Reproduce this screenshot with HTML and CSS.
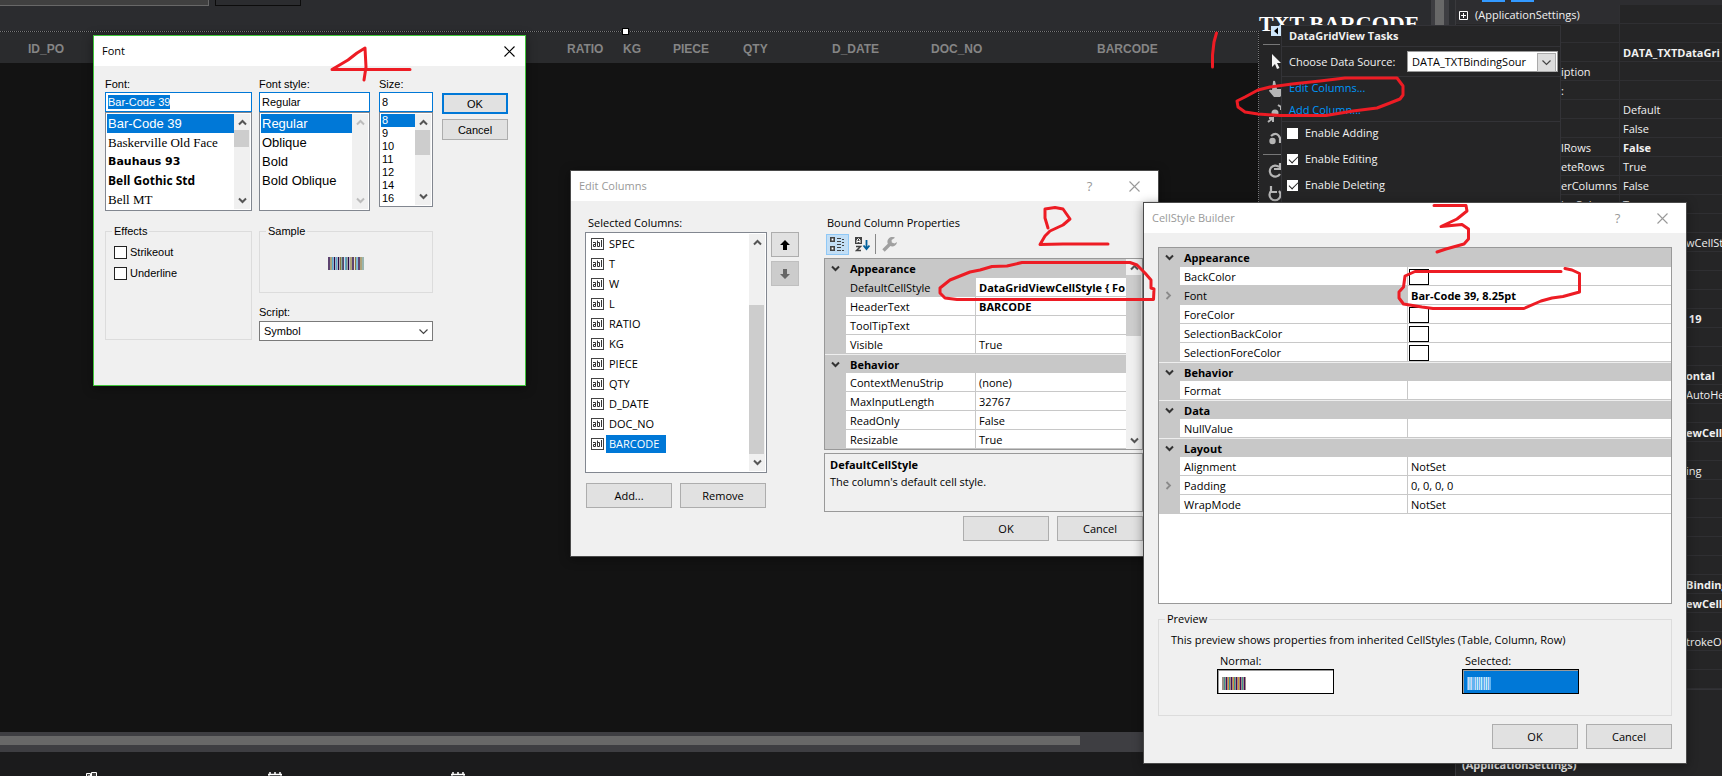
FILE: index.html
```html
<!DOCTYPE html>
<html lang="en">
<head>
<meta charset="utf-8">
<title>DataGridView column font</title>
<link rel="stylesheet" href="styles.css">
</head>
<body>
<svg class="defs" aria-hidden="true">
  <symbol id="up" viewBox="0 0 9 7"><path d="M1 5.500 4.500 2 8 5.500" fill="none" stroke="currentColor" stroke-width="2"/></symbol>
  <symbol id="down" viewBox="0 0 9 7"><path d="M1 1.500 4.500 5 8 1.500" fill="none" stroke="currentColor" stroke-width="2"/></symbol>
  <symbol id="thin" viewBox="0 0 9 7"><path d="M.5 1.500 4.500 5.500 8.500 1.500" fill="none" stroke="currentColor" stroke-width="1.200"/></symbol>
  <symbol id="right" viewBox="0 0 7 9"><path d="M1.500 1 5 4.500 1.500 8" fill="none" stroke="#8a8a8a" stroke-width="1.800"/></symbol>
  <symbol id="close" viewBox="0 0 11 11"><path d="M.5 .5 10.500 10.500M10.500 .5 .5 10.500" fill="none" stroke="currentColor" stroke-width="1.100"/></symbol>
  <symbol id="abl" viewBox="0 0 13 12"><rect x=".5" y=".5" width="12" height="11" fill="#fff" stroke="#424242"/><path d="M2 4.500h2.500v4h-2v-2h2M6.500 2.500v6h2v-4h-2M10.500 2v7" fill="none" stroke="#333"/></symbol>
  <symbol id="calendar" viewBox="0 0 14 5"><path d="M2 0v3M7 0v3M12 0v3M0 2.500h14" stroke="#fff" stroke-width="1.500"/><path d="M1 2v3M13 2v3" stroke="#fff"/><path d="M3 4h8v1H3z" fill="#777"/></symbol>
  <symbol id="bars" viewBox="0 0 36 13" preserveAspectRatio="none"><path d="M1 0v13M6.500 0v13M10.500 0v13M15 0v13M20.500 0v13M25 0v13M31 0v13" stroke="#2c0a45" stroke-width="1.500"/><path d="M3 0v13M12.500 0v13M23 0v13M27.500 0v13M33 0v13" stroke="#8b7b3c" stroke-width="1.300"/><path d="M4.700 0v13M8.500 0v13M17.500 0v13M29 0v13" stroke="#5ea8cf" stroke-width="1.500"/><path d="M14 0v13M18.800 0v13M35 0v13" stroke="#427a70"/></symbol>
  <symbol id="bars-small" viewBox="0 0 24 13"><path d="M0 0h24v13H0z" fill="#9c8f86"/><path d="M4.500 0v13M9.500 0v13M14.500 0v13M18.500 0v13M22.500 0v13" stroke="#4b0a55"/><path d="M2.500 0v13M7.500 0v13M12.500 0v13M20.500 0v13" stroke="#3f9392"/><path d="M6.500 0v13M11.500 0v13M16.500 0v13" stroke="#d98d3c"/></symbol>
  <symbol id="bars-light" viewBox="0 0 24 13"><path d="M0 0h24v13H0z" fill="#63b4f0"/><path d="M1.500 0v13M4.500 0v13M8.500 0v13M12.500 0v13M17.500 0v13M21.500 0v13" stroke="#c9d3f5"/><path d="M3 0v13M10.500 0v13M14.500 0v13M19.500 0v13" stroke="#b8f2f8"/></symbol>
</svg>

<div class="ide">
  <main class="designer">
    <div class="topstrip"><div class="field"></div><div class="field dark"></div></div>
    <div class="form">
      <div class="grid-view">
        <table class="columns">
          <tr><th class="c-id">ID_PO</th><th class="c-ratio">RATIO</th><th class="c-kg">KG</th><th class="c-piece">PIECE</th><th class="c-qty">QTY</th><th class="c-date">D_DATE</th><th class="c-doc">DOC_NO</th><th>BARCODE</th></tr>
        </table>
      </div>
      <div class="tools">
        <hr>
        <svg width="22" height="160" viewBox="0 0 22 160">
          <path d="M13 9v13l3-3 2 5 2.500-1-2.500-5h4z" fill="#f4f4f4"/>
          <path d="M14 37q0-2 2-1l2 8h5v6l-2 2h-6l-5-6q0-2 3-1z" fill="#b5b5b5"/>
          <circle cx="16" cy="68" r="3.500" fill="#b5b5b5"/><path d="M19 60l3 2v3M9 77l5-4M10 73h4v4" fill="none" stroke="#b5b5b5" stroke-width="2"/>
          <circle cx="13.500" cy="96" r="3.200" fill="#b5b5b5"/><path d="M12 91q6-5 9 2v5" fill="none" stroke="#b5b5b5" stroke-width="2.200"/>
          <path d="M4 109.500h18" stroke="#777"/>
          <path d="M20 122a5.500 5.500 0 1 0 1 7M21 118v6h-6" fill="none" stroke="#b5b5b5" stroke-width="2.200"/>
          <path d="M12 146a5.500 5.500 0 1 0 8 0M12 141v6h6" fill="none" stroke="#b5b5b5" stroke-width="2.200"/>
        </svg>
      </div>
    </div>
    <div class="hscroll"><div class="hthumb"></div></div>
    <div class="tray">
      <svg width="14" height="5" viewBox="0 0 14 5"><path d="M1.500 5V1.500h4V5M6.500 5V.5h5V5M3 4h2" fill="#444" stroke="#fff"/></svg>
      <svg width="14" height="5"><use href="#calendar"/></svg>
      <svg width="14" height="5"><use href="#calendar"/></svg>
    </div>
    <div class="caption">TXT BARCODE</div>
    <div class="handle"></div>
    <div class="vscroll"></div>
  </main>
  <aside class="props">
    <div class="props-bar"><span></span><span></span></div>
    <table class="props-table">
      <tr class="first"><td><svg width="9" height="9" viewBox="0 0 9 9"><path d="M.5.5h8v8h-8zM2 4.500h5M4.500 2v5" fill="none" stroke="#fff"/></svg>(ApplicationSettings)</td><td></td></tr>
      <tr><td></td><td></td></tr>
      <tr><td></td><td><b>DATA_TXTDataGri</b></td></tr>
      <tr><td class="cut">iption</td><td></td></tr>
      <tr><td class="cut">:</td><td></td></tr>
      <tr><td></td><td>Default</td></tr>
      <tr><td></td><td>False</td></tr>
      <tr><td class="cut">lRows</td><td><b>False</b></td></tr>
      <tr><td class="cut">eteRows</td><td>True</td></tr>
      <tr><td class="cut">erColumns</td><td>False</td></tr>
      <tr><td class="cut">izeColumns</td><td>True</td></tr>
      <tr><td></td><td></td></tr>
      <tr><td></td><td class="tail">wCellSt</td></tr>
      <tr><td></td><td></td></tr><tr><td></td><td></td></tr><tr><td></td><td></td></tr>
      <tr><td></td><td class="tail"><b>&nbsp;19</b></td></tr>
      <tr><td></td><td></td></tr><tr><td></td><td></td></tr>
      <tr><td></td><td class="tail"><b>ontal</b></td></tr>
      <tr><td></td><td class="tail">AutoHe</td></tr>
      <tr><td></td><td></td></tr>
      <tr><td></td><td class="tail"><b>ewCell</b></td></tr>
      <tr><td></td><td></td></tr>
      <tr><td></td><td class="tail">ing</td></tr>
      <tr><td></td><td></td></tr><tr><td></td><td></td></tr><tr><td></td><td></td></tr><tr><td></td><td></td></tr><tr><td></td><td></td></tr>
      <tr><td></td><td class="tail"><b>Binding</b></td></tr>
      <tr><td></td><td class="tail"><b>ewCell</b></td></tr>
      <tr><td></td><td></td></tr>
      <tr><td></td><td class="tail">trokeOn</td></tr>
      <tr><td></td><td></td></tr><tr><td></td><td></td></tr>
    </table>
    <div class="props-help">(ApplicationSettings)</div>
  </aside>
</div>

<section class="tasks">
  <svg class="tag" width="10" height="10" viewBox="0 0 10 10"><rect width="10" height="10" fill="#cfe6fa"/><path d="M7 1.500v7L3 5z" fill="#000"/></svg>
  <h2>DataGridView Tasks</h2>
  <div class="source"><label for="src">Choose Data Source:</label>
    <div class="combo"><select id="src"><option>DATA_TXTBindingSour</option></select><i><svg width="9" height="7"><use href="#thin"/></svg></i></div></div>
  <div class="links"><a href="#">Edit Columns...</a><a href="#">Add Column...</a></div>
  <div class="checks">
    <label><input type="checkbox">Enable Adding</label>
    <label><input type="checkbox" checked>Enable Editing</label>
    <label><input type="checkbox" checked>Enable Deleting</label>
  </div>
</section>

<section class="window edit">
  <header><h2>Edit Columns</h2><button class="icon">?</button><button class="icon" aria-label="Close"><svg width="11" height="11"><use href="#close"/></svg></button></header>
  <div class="edit-body">
    <div class="left">
      <h3>Selected Columns:</h3>
      <div class="pick">
        <div class="list">
          <ul class="fields">
            <li><svg><use href="#abl"/></svg><span>SPEC</span></li>
            <li><svg><use href="#abl"/></svg><span>T</span></li>
            <li><svg><use href="#abl"/></svg><span>W</span></li>
            <li><svg><use href="#abl"/></svg><span>L</span></li>
            <li><svg><use href="#abl"/></svg><span>RATIO</span></li>
            <li><svg><use href="#abl"/></svg><span>KG</span></li>
            <li><svg><use href="#abl"/></svg><span>PIECE</span></li>
            <li><svg><use href="#abl"/></svg><span>QTY</span></li>
            <li><svg><use href="#abl"/></svg><span>D_DATE</span></li>
            <li><svg><use href="#abl"/></svg><span>DOC_NO</span></li>
            <li><svg><use href="#abl"/></svg><span class="on">BARCODE</span></li>
          </ul>
          <div class="bar"><svg width="9" height="7"><use href="#up"/></svg><div class="track"><div class="thumb t-fields"></div></div><svg width="9" height="7"><use href="#down"/></svg></div>
        </div>
        <div class="move">
          <button class="btn" aria-label="Move up"><svg width="10" height="10" viewBox="0 0 10 10"><path d="M5 0l5 5H7v5H3V5H0z" fill="#000"/></svg></button>
          <button class="btn off" aria-label="Move down"><svg width="10" height="10" viewBox="0 0 10 10"><path d="M5 10l5-5H7V0H3v5H0z" fill="#666"/></svg></button>
        </div>
      </div>
      <div class="pair"><button class="btn">Add...</button><button class="btn">Remove</button></div>
    </div>
    <div class="bound">
      <h3>Bound Column Properties</h3>
      <div class="toolbar">
        <button class="on" aria-label="Categorized"><svg width="15" height="15" viewBox="0 0 15 15"><path d="M.8.8h3.400v3.400H.8zM.8 9.800h3.400v3.400H.8z" fill="#fff" stroke="#424242" stroke-width="1.600"/><path d="M7 1.500h4M7 4.500h4M7 7.500h4M7 10.500h4M7 13.500h4M12 2.500h2M12 5.500h2M12 8.500h2M12 13.500h2" stroke="#424242"/></svg></button>
        <button aria-label="Alphabetical"><svg width="15" height="15" viewBox="0 0 15 15"><path d="M0 0h7v7H0z" fill="#424242"/><path d="M2 6V3l1.500-1.500L5 3v3M2 4.500h3" stroke="#fff" fill="none"/><path d="M1 9.500h4.500l-4 4H6" stroke="#424242" stroke-width="1.500" fill="none"/><path d="M11.500 3v8M8.500 8.500l3 3.500 3-3.500" stroke="#00609c" stroke-width="1.800" fill="none"/></svg></button>
        <i></i>
        <button aria-label="Property pages"><svg width="16" height="15" viewBox="0 0 16 15"><path d="M1.500 13.500 8 7" stroke="#a0a0a0" stroke-width="3.400"/><path d="M13 .8A4.800 4.800 0 1 0 15 5L12.500 6.500 9.800 5.500 9.600 3z" fill="#a0a0a0"/></svg></button>
      </div>
      <div class="grid-box">
        <table class="pg">
          <colgroup><col class="gut"><col class="name"><col></colgroup>
          <tr class="cat"><th><svg width="9" height="7"><use href="#down"/></svg></th><td colspan="2">Appearance</td></tr>
          <tr class="sel"><th></th><td>DefaultCellStyle</td><td><b>DataGridViewCellStyle { Fo</b></td></tr>
          <tr><th></th><td>HeaderText</td><td><b>BARCODE</b></td></tr>
          <tr><th></th><td>ToolTipText</td><td></td></tr>
          <tr><th></th><td>Visible</td><td>True</td></tr>
          <tr class="cat"><th><svg width="9" height="7"><use href="#down"/></svg></th><td colspan="2">Behavior</td></tr>
          <tr><th></th><td>ContextMenuStrip</td><td>(none)</td></tr>
          <tr><th></th><td>MaxInputLength</td><td>32767</td></tr>
          <tr><th></th><td>ReadOnly</td><td>False</td></tr>
          <tr><th></th><td>Resizable</td><td>True</td></tr>
        </table>
        <div class="bar"><svg width="9" height="7"><use href="#up"/></svg><div class="track"><div class="thumb t-props"></div></div><svg width="9" height="7"><use href="#down"/></svg></div>
      </div>
      <div class="help"><b>DefaultCellStyle</b><p>The column's default cell style.</p></div>
      <div class="pair end"><button class="btn">OK</button><button class="btn">Cancel</button></div>
    </div>
  </div>
</section>

<section class="window style">
  <header><h2>CellStyle Builder</h2><button class="icon">?</button><button class="icon" aria-label="Close"><svg width="11" height="11"><use href="#close"/></svg></button></header>
  <div class="style-body">
    <div class="grid-box tall">
      <table class="pg">
        <colgroup><col class="gut"><col class="name-wide"><col></colgroup>
        <tr class="cat"><th><svg width="9" height="7"><use href="#down"/></svg></th><td colspan="2">Appearance</td></tr>
        <tr><th></th><td>BackColor</td><td class="sw"><i></i></td></tr>
        <tr class="sel"><th><svg width="7" height="9"><use href="#right"/></svg></th><td>Font</td><td><b>Bar-Code 39, 8.25pt</b></td></tr>
        <tr><th></th><td>ForeColor</td><td class="sw"><i></i></td></tr>
        <tr><th></th><td>SelectionBackColor</td><td class="sw"><i></i></td></tr>
        <tr><th></th><td>SelectionForeColor</td><td class="sw"><i></i></td></tr>
        <tr class="cat"><th><svg width="9" height="7"><use href="#down"/></svg></th><td colspan="2">Behavior</td></tr>
        <tr><th></th><td>Format</td><td></td></tr>
        <tr class="cat"><th><svg width="9" height="7"><use href="#down"/></svg></th><td colspan="2">Data</td></tr>
        <tr><th></th><td>NullValue</td><td></td></tr>
        <tr class="cat"><th><svg width="9" height="7"><use href="#down"/></svg></th><td colspan="2">Layout</td></tr>
        <tr><th></th><td>Alignment</td><td>NotSet</td></tr>
        <tr><th><svg width="7" height="9"><use href="#right"/></svg></th><td>Padding</td><td>0, 0, 0, 0</td></tr>
        <tr><th></th><td>WrapMode</td><td>NotSet</td></tr>
      </table>
    </div>
    <fieldset class="preview">
      <legend>Preview</legend>
      <p>This preview shows properties from inherited CellStyles (Table, Column, Row)</p>
      <div class="samples">
        <div><span>Normal:</span><div class="cell"><svg width="24" height="13"><use href="#bars-small"/></svg></div></div>
        <div><span>Selected:</span><div class="cell blue"><svg width="24" height="13"><use href="#bars-light"/></svg></div></div>
      </div>
    </fieldset>
    <div class="pair end"><button class="btn">OK</button><button class="btn">Cancel</button></div>
  </div>
</section>

<section class="window font">
  <header><h2>Font</h2><button class="icon" aria-label="Close"><svg width="11" height="11"><use href="#close"/></svg></button></header>
  <div class="font-body">
    <div class="row">
      <div class="col w-font">
        <label for="f1">Font:</label>
        <div class="edit-line"><input id="f1" type="text" value="Bar-Code 39" class="marked"></div>
        <div class="list">
          <ul class="fonts"><li class="on">Bar-Code 39</li><li class="old">Baskerville Old Face</li><li class="bau">Bauhaus 93</li><li class="goth">Bell Gothic Std</li><li class="old">Bell MT</li></ul>
          <div class="bar"><svg width="9" height="7"><use href="#up"/></svg><div class="track"><div class="thumb t-font"></div></div><svg width="9" height="7"><use href="#down"/></svg></div>
        </div>
      </div>
      <div class="col w-style">
        <label for="f2">Font style:</label>
        <div class="edit-line"><input id="f2" type="text" value="Regular"></div>
        <div class="list">
          <ul class="fonts"><li class="on">Regular</li><li>Oblique</li><li>Bold</li><li>Bold Oblique</li></ul>
          <div class="bar idle"><svg width="9" height="7"><use href="#up"/></svg><div class="track"></div><svg width="9" height="7"><use href="#down"/></svg></div>
        </div>
      </div>
      <div class="col w-size">
        <label for="f3">Size:</label>
        <div class="edit-line"><input id="f3" type="text" value="8"></div>
        <div class="list short">
          <ul class="sizes"><li class="on">8</li><li>9</li><li>10</li><li>11</li><li>12</li><li>14</li><li>16</li></ul>
          <div class="bar"><svg width="9" height="7"><use href="#up"/></svg><div class="track"><div class="thumb t-size"></div></div><svg width="9" height="7"><use href="#down"/></svg></div>
        </div>
      </div>
      <div class="actions"><button class="btn main">OK</button><button class="btn">Cancel</button></div>
    </div>
    <div class="row lower">
      <fieldset class="effects w-font">
        <legend>Effects</legend>
        <label><input type="checkbox">Strikeout</label>
        <label><input type="checkbox">Underline</label>
      </fieldset>
      <div class="side">
        <fieldset class="sample"><legend>Sample</legend><svg width="36" height="13"><use href="#bars"/></svg></fieldset>
        <label for="script">Script:</label>
        <div class="combo"><select id="script"><option>Symbol</option></select><i><svg width="9" height="7"><use href="#thin"/></svg></i></div>
      </div>
    </div>
  </div>
</section>

<svg class="ink" width="1722" height="776" viewBox="0 0 1722 776" aria-hidden="true">
  <path d="M410 69.500H332L348 60 357 53 365 48 366 67 364 80"/>
  <path d="M1216.500 33 1214 42 1212.500 55V67"/>
  <path d="M1397 78H1345L1320 81 1292 84 1270 87 1258 90 1245 97 1237 101 1238 107 1245 112 1258 114 1280 115.500H1326L1353 111 1377 108 1390 103 1400 99 1403 95V86Z"/>
  <path d="M1048 228 1045 218V209L1055 207.500 1063 209 1070 219 1063 225 1050 231 1045 236 1040 244.500 1063 244H1108"/>
  <path d="M1130 262.500H1022L1007 266 992 266.500 980 270 970 272 950 280 940 288V293L945 298 957 299.500H1153.500L1154 289 1151 288V280L1145 273 1137 265Z"/>
  <path d="M1434 205.500H1466L1467 211 1457 219 1441 226.500 1462 224.500 1468.500 229V239L1464 244 1446 249 1437 252"/>
  <path d="M1561 271.500H1415L1405 276 1403.500 287 1399 292V298L1403.500 304 1422 307 1433 308.500H1524L1541 301 1552 298 1563 296.500 1579.500 292V273.500L1572 270 1565 268.500"/>
</svg>
</body>
</html>
```
FILE: styles.css
```css
* { box-sizing: border-box; }
body { margin: 0; height: 100vh; overflow: hidden; position: relative; background: #131313; font: 11px/16px "Open Sans", "Noto Sans", sans-serif; color: #000; }
h2, h3, p, ul, table, fieldset { margin: 0; padding: 0; font-size: 11px; font-weight: 400; }
ul { list-style: none; }
svg { display: block; flex: none; }
button, input, select { font: inherit; color: inherit; margin: 0; }
.defs { position: absolute; width: 0; height: 0; }
.ink { position: absolute; left: 0; top: 0; pointer-events: none; }
.ink path { fill: none; stroke: #ed1c24; stroke-width: 3; stroke-linejoin: round; stroke-linecap: round; }

/* IDE behind the dialogs */
.ide { display: flex; height: 100%; }
.designer { flex: 1; min-width: 0; display: flex; flex-direction: column; position: relative; background: #2b2c2f; }
.topstrip { display: flex; gap: 6px; height: 31px; }
.field { width: 209px; height: 6px; background: #404040; border: solid #686868; border-width: 0 1px 1px 0; }
.field.dark { width: 86px; background: #2b2c2f; border: 1px solid #0c0c0c; border-top: 0; }
.form { flex: 1; display: flex; }
.grid-view { flex: 1; border: dotted #77787a; border-width: 1px 1px 0 0; background: #131313; }
.columns { width: 100%; table-layout: fixed; border-spacing: 0; background: #2a2b2d; }
.columns th { height: 31px; padding: 3px 0 0 5px; text-align: left; font: bold 12px/16px "Liberation Sans", Arial, sans-serif; color: #858585; }
.columns .c-id { width: 562px; padding-left: 28px; }
.c-ratio { width: 56px; }
.c-kg { width: 50px; }
.c-piece { width: 70px; }
.c-qty { width: 89px; }
.c-date { width: 99px; }
.c-doc { width: 166px; }
.tools { width: 196px; padding-top: 13px; background: #252526; }
.tools hr { width: 17px; margin: 0 0 0 4px; border: 0; border-top: 1px solid #777; }
.hscroll { height: 20px; padding-top: 4px; background: #3e3e42; }
.hthumb { width: 1080px; height: 9px; background: #686868; }
.tray { height: 24px; padding: 20px 0 0 85px; display: flex; gap: 169px; background: #1b1b1c; }
.caption { position: absolute; left: 1259px; top: 12px; color: #fff; font: bold 22px/24px "Liberation Serif", serif; }
.handle { position: absolute; left: 622px; top: 28px; width: 7px; height: 7px; background: #fff; border: 1px solid #000; }
.vscroll { position: absolute; right: 6px; top: 0; width: 18px; height: 732px; background: #686868; border: solid #3e3e42; border-width: 0 5px 0 4px; }
.props { width: 267px; overflow: hidden; display: flex; flex-direction: column; background: #252526; border-left: 1px solid #3a3a3d; color: #f1f1f1; }
.props-bar { height: 5px; padding-left: 26px; display: flex; gap: 6px; background: #2d2d30; }
.props-bar span { width: 23px; height: 2px; background: #3399ff; }
.props-table { width: 100%; table-layout: fixed; border-spacing: 0; border-bottom: 1px solid #333337; }
.props-table td { height: 19px; padding: 2px 0 0 3px; border-bottom: 1px solid #2f2f32; line-height: 16px; white-space: nowrap; overflow: hidden; }
.props-table td:first-child { width: 164px; border-right: 1px solid #2f2f32; }
.props-table .first td:first-child { background: #2d2d30; }
.props-table td svg { display: inline-block; vertical-align: -1px; margin-right: 7px; }
.props-table td.cut { padding-left: 105px; }
.props-table td.tail { padding-left: 66px; }
.props-help { margin-top: auto; padding: 0 0 3px 6px; font-weight: 700; }

/* Smart-tag panel */
.tasks { position: absolute; left: 1281px; top: 25px; width: 280px; height: 180px; background: #252526; border: 1px solid #333337; color: #f1f1f1; }
.tag { position: absolute; left: -11px; top: 0; }
.tasks h2 { padding: 2px 7px; height: 21px; font-weight: 700; border-bottom: 1px solid #333337; }
.source { display: flex; align-items: center; justify-content: space-between; height: 30px; padding: 0 2px 0 7px; border-bottom: 1px solid #333337; }
.combo { position: relative; display: flex; }
.combo select { appearance: none; width: 100%; height: 20px; padding: 0 0 0 4px; border: 1px solid #7a7a7a; border-radius: 0; background: #fff; color: #000; }
.combo i { position: absolute; right: 5px; top: 7px; color: #444; pointer-events: none; }
.source .combo { width: 151px; }
.source .combo select { height: 21px; border-color: #999; }
.source .combo i { right: 2px; top: 2px; padding: 5px 4px; background: #ddd; border: 1px solid #aaa; }
.links { display: flex; flex-direction: column; gap: 6px; height: 45px; padding: 3px 7px; border-bottom: 1px solid #333337; }
.links a { color: #0097fb; text-decoration: none; }
.checks { display: flex; flex-direction: column; gap: 10px; padding: 3px 5px; }
.checks label { display: flex; align-items: center; gap: 7px; }
input[type=checkbox] { appearance: none; width: 11px; height: 11px; background: #fff; position: relative; }
input[type=checkbox]:checked::after { content: ""; position: absolute; left: 2px; top: 2px; width: 8px; height: 4px; border: solid #222; border-width: 0 0 1px 1px; transform: rotate(-45deg); }

/* Shared window parts */
.window { position: absolute; background: #f0f0f0; border: 1px solid #4a4a4a; box-shadow: 0 2px 10px rgba(0, 0, 0, .4); }
.window header { display: flex; align-items: center; height: 30px; padding: 0 18px 0 8px; background: #fff; color: #999; }
.window header h2 { flex: 1; }
.icon { display: flex; justify-content: center; min-width: 11px; padding: 0; border: 0; background: none; font-size: 13px; }
.icon + .icon { margin-left: 34px; }
.btn { display: flex; align-items: center; justify-content: center; width: 86px; height: 25px; padding: 0; background: #e1e1e1; border: 1px solid #adadad; }
.btn.off { background: #ccc; border-color: #bfbfbf; }
.pair { display: flex; gap: 8px; }
.end { justify-content: flex-end; }
.list { display: flex; padding: 1px; background: #fff; border: 1px solid #828790; overflow: hidden; }
.list ul { flex: 1; min-width: 0; }
.bar { display: flex; flex-direction: column; align-items: center; width: 16px; padding: 5px 0; background: #f0f0f0; color: #555; }
.bar.idle { color: #bcbcbc; }
.track { flex: 1; width: 100%; padding: 4px 1px 0 0; }
.thumb { background: #cdcdcd; }
.on { background: #0078d7; color: #fff; }
fieldset { border: 1px solid #dcdcdc; min-width: 0; }
legend { padding: 0 2px; line-height: 16px; }
.grid-box { display: flex; border: 1px solid #999; background: #fff; overflow: hidden; }
.pg { flex: 1; min-width: 0; width: 100%; table-layout: fixed; border-spacing: 0; line-height: 16px; }
.pg th { height: 19px; padding: 0 0 0 6px; background: #c8c8c8; color: #333; }
.pg td { height: 19px; padding: 1px 0 0 4px; border-bottom: 1px solid #c8c8c8; white-space: nowrap; overflow: hidden; }
.pg td:nth-child(3) { border-left: 1px solid #c8c8c8; padding-left: 3px; }
.pg .cat td { background: #c8c8c8; font-weight: 700; }
.pg tr + .cat td, .pg tr + .cat th { border-top: 1px solid #eee; }
.pg tr + .cat td { border-bottom: 0; }
.pg .sel td:nth-child(2) { background: #c8c8c8; }
.gut { width: 21px; }
.name { width: 129px; }
.name-wide { width: 227px; }
.pg td.sw { padding: 1px 0 0 1px; }
.sw i { display: block; width: 20px; height: 16px; border: 1px solid #000; }

/* Edit Columns */
.edit { left: 570px; top: 170px; width: 589px; }
.edit-body { display: grid; grid-template-columns: 214px 1fr; gap: 25px; padding: 14px 15px 15px 14px; }
.edit h3 { height: 17px; padding-left: 3px; }
.pick { display: flex; gap: 4px; margin-bottom: 10px; }
.pick .list { flex: 1; height: 241px; }
.fields { padding: 0 0 0 4px; }
.fields li { display: flex; align-items: center; gap: 2px; height: 20px; }
.fields svg { width: 13px; height: 12px; }
.fields span { padding: 1px 7px 1px 3px; }
.t-fields { height: 149px; margin-top: 55px; }
.move { display: flex; flex-direction: column; gap: 4px; }
.move .btn { width: 28px; }
.left .pair { padding-left: 1px; }
.toolbar { display: flex; align-items: center; gap: 2px; height: 26px; padding: 0 2px 2px; }
.toolbar button { display: flex; justify-content: center; align-items: center; width: 23px; height: 21px; padding: 0; border: 1px solid transparent; background: none; }
.toolbar .on { background: #c2def5; border-color: #90c8f6; }
.toolbar i { width: 1px; height: 20px; margin-left: -1px; background: #888; }
.bound { min-width: 0; }
.bound .grid-box { height: 192px; margin-bottom: 3px; }
.t-props { height: 61px; }
.help { height: 59px; margin-bottom: 4px; padding: 3px 5px; border: 1px solid #999; }
.help p { margin-top: 1px; }

/* CellStyle Builder */
.style { left: 1143px; top: 202px; width: 544px; }
.style-body { padding: 14px; }
.tall { height: 357px; margin-bottom: 7px; align-items: flex-start; }
.preview { height: 105px; margin-bottom: 8px; padding: 5px 6px; }
.preview p { margin: 0 6px 5px; }
.samples { display: grid; grid-template-columns: 245px 1fr; padding-left: 52px; }
.samples span { display: block; padding-left: 3px; }
.cell { width: 117px; height: 25px; padding: 7px 0 0 4px; background: #fff; border: 1px solid #000; box-shadow: inset 1px 1px #999; }
.blue { background: #0078d7; }

/* Font */
.font { left: 93px; top: 35px; width: 433px; border-color: #3fc63a; font: 11px/16px "Liberation Sans", Arial, sans-serif; }
.window.font header { color: #000; padding-right: 10px; font-family: "Open Sans", "Noto Sans", sans-serif; }
.font-body { padding: 10px 11px 44px; }
.row { display: flex; }
.col { margin-right: 7px; }
.col label, .side label { display: block; }
.w-font { width: 147px; }
.w-style { width: 111px; }
.w-size { width: 54px; margin: 0 9px 0 2px; }
.edit-line { display: flex; height: 20px; padding: 2px; background: #fff; border: 1px solid #0078d7; }
.edit-line input { width: 100%; height: 14px; padding: 0; border: 0; background: none; line-height: 14px; }
.edit-line .marked { width: 62px; background: #0078d7; color: #fff; }
.col .list { height: 99px; }
.col .list.short { height: 95px; }
.fonts li { height: 19px; font-size: 13px; line-height: 19px; white-space: nowrap; padding-left: 1px; }
.sizes li { height: 13px; line-height: 13px; padding-left: 1px; }
.fonts .old { font-family: "Liberation Serif", serif; }
.fonts .bau { font-weight: 700; font-family: "DejaVu Sans", sans-serif; font-size: 11px; }
.fonts .goth { font-weight: 700; font-family: "Open Sans", sans-serif; font-size: 12px; }
.t-font { height: 17px; }
.t-size { height: 25px; }
.actions { display: flex; flex-direction: column; gap: 5px; padding-top: 17px; }
.actions .btn { width: 66px; height: 21px; }
.actions .main { border: 2px solid #0078d7; }
.lower { gap: 7px; padding-top: 12px; }
.effects { height: 117px; padding: 5px 6px; }
.effects label { display: flex; align-items: center; gap: 3px; margin: 0 2px 5px; }
.effects input { width: 13px; height: 13px; border: 1px solid #222; }
.side { width: 174px; }
.sample { height: 70px; margin-bottom: 11px; padding: 0 6px; }
.sample svg { margin: 18px auto 0; }
.side .combo { margin-top: 1px; }
```
